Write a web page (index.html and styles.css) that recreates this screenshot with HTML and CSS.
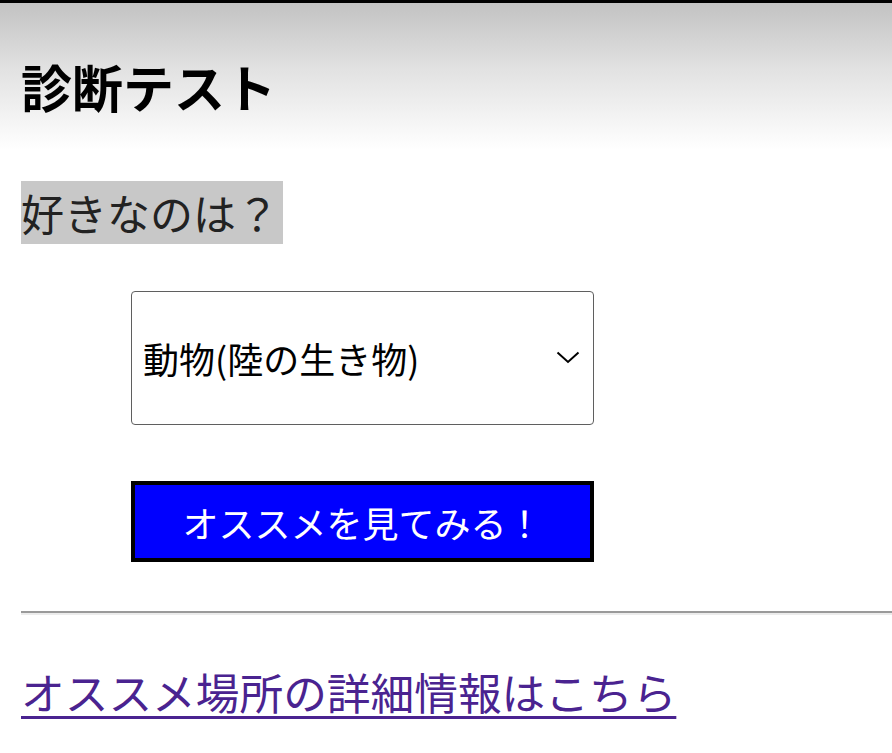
FILE: index.html
```html
<!DOCTYPE html>
<html lang="ja">
<head>
<meta charset="utf-8">
<title>診断テスト</title>
<link rel="stylesheet" href="styles.css">
</head>
<body>
<main class="page">
  <h1 class="title">診断テスト</h1>
  <p class="question"><span class="question-label">好きなのは？</span></p>
  <div class="select-wrap">
    <select class="choice">
      <option>動物(陸の生き物)</option>
      <option>魚(海の生き物)</option>
    </select>
    <svg class="chevron" width="24" height="13" viewBox="0 0 24 13" aria-hidden="true"><path d="M1.5 1.5 L12 11 L22.5 1.5" fill="none" stroke="#000" stroke-width="2"/></svg>
  </div>
  <button class="submit" type="button">オススメを見てみる！</button>
  <hr class="rule">
  <a class="detail-link" href="#">オススメ場所の詳細情報はこちら</a>
</main>
</body>
</html>
```
FILE: styles.css
```css
html, body {
  margin: 0;
  padding: 0;
}
body {
  border-top: 3px solid #000;
  background: linear-gradient(#c1c1c1 0px, #e2e2e2 70px, #ffffff 150px) no-repeat;
  background-color: #fff;
  min-height: 750px;
  font-family: "Noto Sans CJK JP", "Noto Sans", sans-serif;
  color: #000;
}
.page {
  padding-left: 21px;
  display: flex;
  flex-direction: column;
  align-items: flex-start;
}
.title {
  margin: 52px 0 0 0;
  font-size: 51px;
  line-height: 62px;
  font-weight: 700;
}
.question {
  margin: 64px 0 0 0;
}
.question-label {
  display: inline-block;
  background: #c8c8c8;
  color: #222;
  font-size: 43px;
  line-height: 63px;
  padding-right: 4px;
}
.select-wrap {
  position: relative;
  margin: 47px 0 0 110px;
}
.choice {
  appearance: none;
  -webkit-appearance: none;
  width: 463px;
  height: 134px;
  box-sizing: border-box;
  border: 1.5px solid #5f5f5f;
  border-radius: 4px;
  background: #fff;
  font-family: "Noto Sans CJK JP", "Noto Sans", sans-serif;
  font-size: 36px;
  color: #000;
  padding: 0 0 0 11px;
  display: block;
}
.chevron {
  position: absolute;
  left: 425px;
  top: 60px;
}
.submit {
  margin: 56px 0 0 110px;
  width: 463px;
  height: 81px;
  box-sizing: border-box;
  border: 4px solid #000;
  background: #0000ff;
  color: #fff;
  font-family: "Noto Sans CJK JP", "Noto Sans", sans-serif;
  font-size: 36px;
  padding: 0;
}
.rule {
  align-self: stretch;
  margin: 49px 0 0 0;
  border: 0;
  border-top: 2px solid #9a9a9a;
  border-bottom: 2px solid #ececec;
  height: 0;
}
.detail-link {
  margin-top: 51px;
  font-size: 43.7px;
  line-height: 50px;
  color: #4a2390;
  text-decoration: underline;
  text-decoration-thickness: 3px;
  text-underline-offset: 6px;
}
```
